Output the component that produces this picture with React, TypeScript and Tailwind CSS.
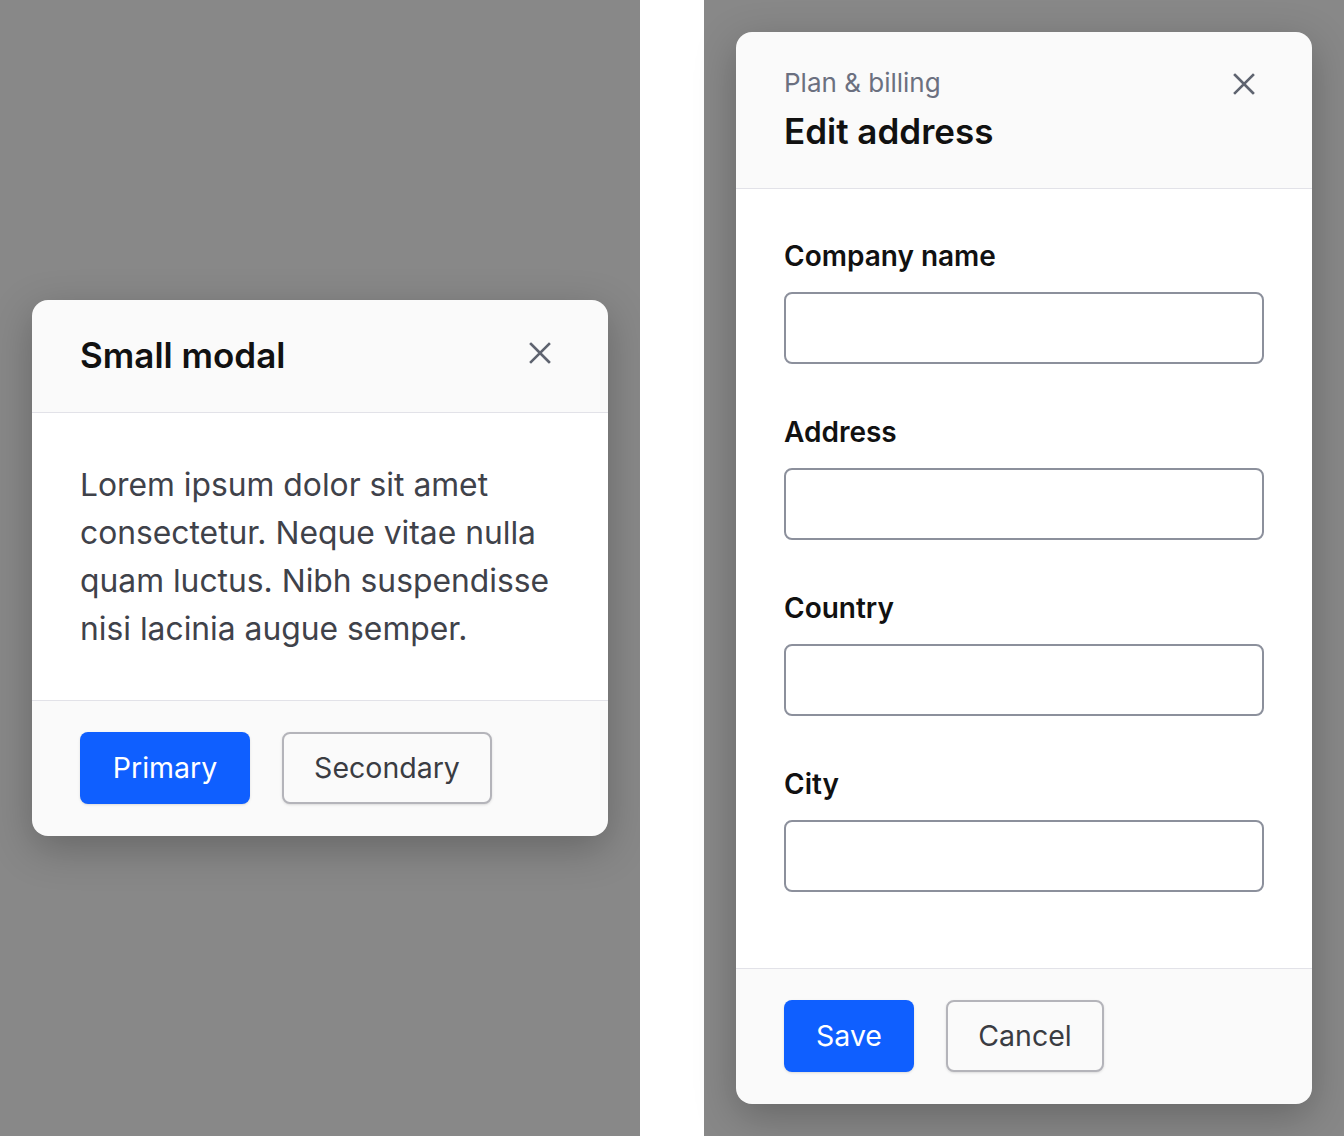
import React from 'react';

const CloseIcon: React.FC = () => (
    <svg width="24" height="24" viewBox="0 0 24 24" fill="none" stroke="#5f6470" strokeWidth="2.6" strokeLinecap="square">
        <path d="M3 3 L21 21 M21 3 L3 21" />
    </svg>
);

const Field: React.FC<{ label: string }> = ({ label }) => (
    <div className="flex flex-col gap-4">
        <label className="text-[28px] leading-[40px] font-semibold text-[#111111]">{label}</label>
        <input
            type="text"
            className="h-[72px] w-full rounded-lg border-2 border-[#8c909c] bg-white px-4 text-[28px] outline-none"
        />
    </div>
);

export default function App() {
    return (
        <div className="flex h-[1136px] w-[1344px] bg-white font-['Inter',sans-serif]">
            {/* Left: small modal */}
            <div className="flex h-full w-[640px] items-center justify-center bg-[#888888]">
                <div className="w-[576px] overflow-hidden rounded-2xl bg-[#fafafa] shadow-[0_12px_40px_rgba(0,0,0,0.25)]">
                    <div className="flex items-center justify-between border-b border-[#e2e2e8] px-12 pt-[31px] pb-[33px]">
                        <h2 className="text-[35px] leading-[48px] font-semibold text-[#111111]">Small modal</h2>
                        <button className="-mt-[5px] flex h-10 w-10 items-center justify-center">
                            <CloseIcon />
                        </button>
                    </div>
                    <div className="bg-white px-12 pt-12 pb-[47px]">
                        <p className="text-[31.8px] leading-[48px] text-[#3f424a]">
                            Lorem ipsum dolor sit amet consectetur. Neque vitae nulla quam luctus. Nibh suspendisse nisi lacinia augue semper.
                        </p>
                    </div>
                    <div className="flex gap-8 border-t border-[#e2e2e8] px-12 pt-[31px] pb-8">
                        <button className="h-[72px] w-[170px] rounded-lg bg-[#0f5fff] text-[28.5px] text-white shadow-sm">Primary</button>
                        <button className="h-[72px] w-[210px] rounded-lg border-2 border-[#b4b4ba] bg-[#fafafa] text-[28.5px] text-[#3a3c42] shadow-sm">Secondary</button>
                    </div>
                </div>
            </div>

            {/* Gap */}
            <div className="h-full w-16 bg-white" />

            {/* Right: form modal */}
            <div className="flex h-full w-[640px] bg-[#888888] p-8">
                <div className="flex w-[576px] flex-col overflow-hidden rounded-2xl bg-[#fafafa] shadow-[0_12px_40px_rgba(0,0,0,0.25)]">
                    <div className="flex items-start justify-between border-b border-[#e2e2e8] px-12 pt-[33px] pb-[31px]">
                        <div className="flex flex-col">
                            <span className="text-[26px] leading-[36px] text-[#6b7080]">Plan &amp; billing</span>
                            <h2 className="mt-1 text-[35px] leading-[52px] font-semibold text-[#111111]">Edit address</h2>
                        </div>
                        <button className="-mt-[1px] flex h-10 w-10 items-center justify-center">
                            <CloseIcon />
                        </button>
                    </div>
                    <div className="flex flex-1 flex-col gap-12 bg-white px-12 pt-[47px]">
                        <Field label="Company name" />
                        <Field label="Address" />
                        <Field label="Country" />
                        <Field label="City" />
                    </div>
                    <div className="flex gap-8 border-t border-[#e2e2e8] px-12 pt-[31px] pb-8">
                        <button className="h-[72px] w-[130px] rounded-lg bg-[#0f5fff] text-[28.5px] text-white shadow-sm">Save</button>
                        <button className="h-[72px] w-[158px] rounded-lg border-2 border-[#b4b4ba] bg-[#fafafa] text-[28.5px] text-[#3a3c42] shadow-sm">Cancel</button>
                    </div>
                </div>
            </div>
        </div>
    );
}
